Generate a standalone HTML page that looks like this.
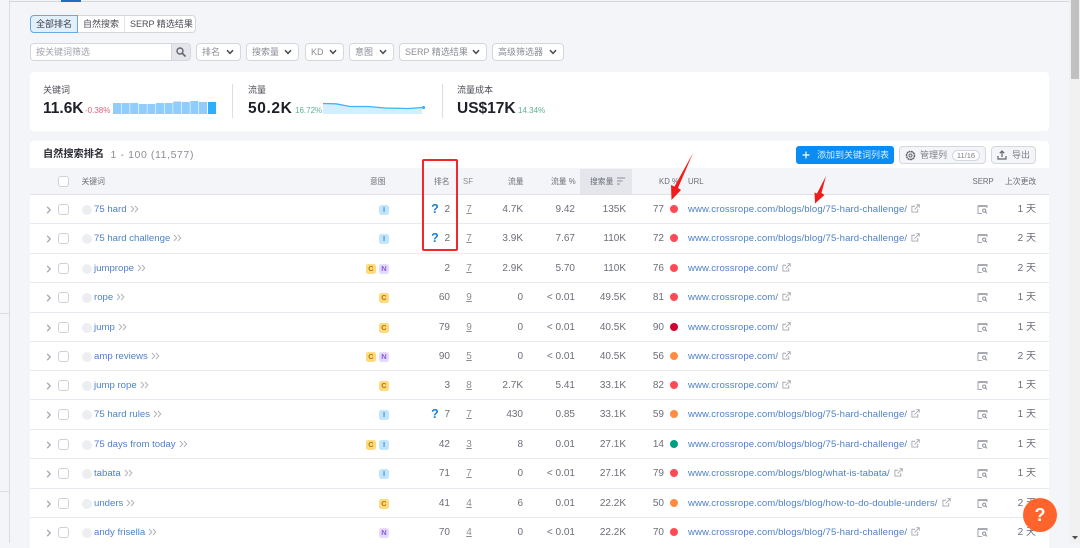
<!DOCTYPE html>
<html lang="zh"><head><meta charset="utf-8"><title>自然搜索排名</title>
<style>
*{box-sizing:border-box}
html,body{margin:0;padding:0}
body{width:1080px;height:543px;overflow:hidden;position:relative;background:#f4f5f9;font:10px/1 "Liberation Sans","Noto Sans CJK SC",sans-serif;color:#6c6e79}
.a{position:absolute}
.btn{position:absolute;top:43px;height:18px;background:#fff;border:1px solid #d5d7df;border-radius:4px;font-size:9px;line-height:16px;color:#8b8d97;padding-left:5px}
.btn svg{position:absolute;right:6px;top:5px}
.h{position:absolute;top:168px;height:27px;line-height:27px;font-size:7.8px;color:#6c6e79;white-space:nowrap}
.r{position:absolute;left:30px;width:1019px;height:30px;background:#fff;line-height:29px;font-size:10px;color:#6c6e79}
.r+.r::before{content:"";position:absolute;left:0;right:0;top:-1px;height:1px;background:#e9eaf0}
.r>*{position:absolute}
.ch{left:16px;top:10px}
.cb{left:28px;top:9px;width:10.5px;height:11px;border:1px solid #cfd1d8;border-radius:3px;background:#fff}
.ci{left:51.500px;top:9.500px;width:10px;height:10px;border-radius:50%;background:#eceef2}
.k{left:64px;color:#4f81c9;white-space:nowrap;font-size:9.6px}
.k svg{margin-left:3px;vertical-align:-1px}
.b{top:9.500px;width:10px;height:10px;border-radius:2.500px;font-size:7.500px;font-weight:bold;line-height:10px;text-align:center}
.bc{background:#ffd97a;color:#a8791a}.bn{background:#e6d9ff;color:#8a5bdc}.bi{background:#c2e5fd;color:#3d8fd0}
.p1{left:349px}.p2{left:336px}
.q{left:401px;width:8px;text-align:center;color:#1f7fd4;font-weight:bold;font-size:12.500px}
.t1{right:599px;width:34px;text-align:right}
.t2{left:434px;width:10px;text-align:center;text-decoration:underline;color:#8b8d97}
.t3{right:526px;width:50px;text-align:right}
.t4{right:474px;width:50px;text-align:right}
.t5{right:423px;width:50px;text-align:right}
.t6{right:385px;width:30px;text-align:right}
.d{left:640px;top:10px;width:8px;height:8px;border-radius:50%}
.dr{background:#ff4953}.dd{background:#d1002f}.do{background:#ff8c43}.dg{background:#009f81}
.u{left:658px;color:#4f81c9;white-space:nowrap;font-size:9.6px;letter-spacing:.09px}
.u svg{margin-left:4px;vertical-align:-1px}
.s{left:947px;top:9px}
.l{right:13px;width:40px;text-align:right;font-size:10px}
</style></head>
<body>
<svg width="0" height="0" style="position:absolute"><defs>
<symbol id="dn" viewBox="0 0 8 6"><path d="M1 1.200 4 4.400 7 1.200" fill="none" stroke="#4b4d57" stroke-width="1.500"/></symbol>
<symbol id="ar" viewBox="0 0 6 10"><path d="M1.200 1.800 4.200 5 1.200 8.200" fill="none" stroke="#a4a6af" stroke-width="1.300"/></symbol>
<symbol id="dbl" viewBox="0 0 9 8"><path d="M1 1 3.800 4 1 7M5 1 7.800 4 5 7" fill="none" stroke="#b2b4bc" stroke-width="1"/></symbol>
<symbol id="ex" viewBox="0 0 10 10"><path d="M7.500 5.500V9H1V2.500H4.500M4 6 9 1M6 .8H9.200V4" fill="none" stroke="#a4a6af" stroke-width="1"/></symbol>
<symbol id="se" viewBox="0 0 11 11"><path d="M1 1.500H10V4M1 1.500V9.500H5" fill="none" stroke="#a8aab3" stroke-width="1.100"/><path d="M1 1.500H10V3H1Z" fill="#a8aab3"/><circle cx="7.200" cy="6.600" r="1.600" fill="none" stroke="#8b8d97" stroke-width="1"/><path d="M8.400 7.800 10 9.400" stroke="#8b8d97" stroke-width="1"/></symbol>
</defs></svg>

<!-- left rail -->
<div class="a" style="left:9px;top:0;width:1px;height:543px;background:#d9dbe3"></div>
<div class="a" style="left:0;top:313px;width:9px;height:1px;background:#dcdee5"></div>
<div class="a" style="left:0;top:491px;width:9px;height:1px;background:#dcdee5"></div>
<!-- top line -->
<div class="a" style="left:9px;top:1px;width:1060px;height:1px;background:#d5d7df"></div>
<div class="a" style="left:61px;top:0;width:20px;height:2px;background:#1b6fc9"></div>

<!-- tabs -->
<div class="a" style="left:30px;top:15px;width:166px;height:18px;background:#fff;border:1px solid #d5d7df;border-radius:4px"></div>
<div class="a" style="left:30px;top:15px;width:48px;height:18px;background:#e2f0fc;border:1px solid #6aa9e0;border-radius:4px 0 0 4px;font-size:9px;line-height:16px;text-align:center;color:#3c3e48">全部排名</div>
<div class="a" style="left:83px;top:15px;height:18px;font-size:9px;line-height:18px;color:#4b4d57">自然搜索</div>
<div class="a" style="left:124px;top:16px;width:1px;height:16px;background:#e4e5ea"></div>
<div class="a" style="left:130px;top:15px;height:18px;font-size:9px;line-height:18px;color:#4b4d57;white-space:nowrap">SERP 精选结果</div>

<!-- filters -->
<div class="a" style="left:30px;top:43px;width:142px;height:18px;background:#fff;border:1px solid #d5d7df;border-radius:4px 0 0 4px;font-size:9px;line-height:16px;color:#a0a2ac;padding-left:5px">按关键词筛选</div>
<div class="a" style="left:171px;top:43px;width:20px;height:18px;background:#e4e6ec;border:1px solid #d5d7df;border-radius:0 4px 4px 0"><svg width="12" height="12" viewBox="0 0 12 12" style="position:absolute;left:3px;top:2px"><circle cx="5" cy="5" r="3" fill="none" stroke="#63656f" stroke-width="1.400"/><path d="M7.200 7.200 10.500 10.500" stroke="#63656f" stroke-width="1.600"/></svg></div>
<div class="btn" style="left:196px;width:45px">排名<svg width="8" height="6"><use href="#dn"/></svg></div>
<div class="btn" style="left:246px;width:53px">搜索量<svg width="8" height="6"><use href="#dn"/></svg></div>
<div class="btn" style="left:305px;width:39px">KD<svg width="8" height="6"><use href="#dn"/></svg></div>
<div class="btn" style="left:349px;width:45px">意图<svg width="8" height="6"><use href="#dn"/></svg></div>
<div class="btn" style="left:399px;width:88px;white-space:nowrap">SERP 精选结果<svg width="8" height="6"><use href="#dn"/></svg></div>
<div class="btn" style="left:492px;width:72px">高级筛选器<svg width="8" height="6"><use href="#dn"/></svg></div>

<!-- stats card -->
<div class="a" style="left:30px;top:72px;width:1019px;height:59px;background:#fff;border-radius:4px"></div>
<div class="a" style="left:43px;top:86px;font-size:9px;color:#4b4d57">关键词</div>
<div class="a" style="left:43px;top:101px;font-size:15.500px;font-weight:bold;color:#1e2029">11.6K</div>
<div class="a" style="left:85px;top:107px;font-size:8px;color:#d9647a">-0.38%</div>
<svg class="a" style="left:113px;top:100px" width="104" height="15">
<g fill="#8fcdfd"><rect x="0" y="3" width="8" height="11"/><rect x="8.600" y="3" width="8" height="11"/><rect x="17.200" y="3" width="8" height="11"/><rect x="25.800" y="4" width="8" height="10"/><rect x="34.400" y="4" width="8" height="10"/><rect x="43" y="3" width="8" height="11"/><rect x="51.600" y="3" width="8" height="11"/><rect x="60.200" y="1.500" width="8" height="12.500"/><rect x="68.800" y="2" width="8" height="12"/><rect x="77.400" y="1" width="8" height="13"/><rect x="86" y="2" width="8" height="12"/></g><rect x="95" y="2" width="8" height="12" fill="#2db0fb"/></svg>
<div class="a" style="left:232px;top:84px;width:1px;height:34px;background:#dcdee5"></div>
<div class="a" style="left:248px;top:86px;font-size:9px;color:#4b4d57">流量</div>
<div class="a" style="left:248px;top:101px;font-size:15.500px;font-weight:bold;color:#1e2029;letter-spacing:.6px">50.2K</div>
<div class="a" style="left:295px;top:107px;font-size:8px;color:#5fae96">16.72%</div>
<svg class="a" style="left:323px;top:101px" width="104" height="16"><path d="M0 2.500 13 2.800 27 5.500 45 5.500 62 7 85 7.500 99 6.500V13H0Z" fill="#d3eefe"/><path d="M0 2.500 13 2.800 27 5.500 45 5.500 62 7 85 7.500 100 6.500" fill="none" stroke="#3cb4fa" stroke-width="1.300"/><circle cx="100.500" cy="6.500" r="1.600" fill="#3cb4fa"/></svg>
<div class="a" style="left:442px;top:84px;width:1px;height:34px;background:#dcdee5"></div>
<div class="a" style="left:457px;top:86px;font-size:9px;color:#4b4d57">流量成本</div>
<div class="a" style="left:457px;top:101px;font-size:15.500px;font-weight:bold;color:#1e2029;white-space:nowrap">US$17K</div>
<div class="a" style="left:518px;top:107px;font-size:8px;color:#5fae96">14.34%</div>

<!-- table card -->
<div class="a" style="left:30px;top:141px;width:1019px;height:402px;background:#fff;border-radius:4px 4px 0 0"></div>
<div class="a" style="left:43px;top:150px;font-size:10.200px;font-weight:bold;color:#2b2d37;white-space:nowrap">自然搜索排名</div>
<div class="a" style="left:110.500px;top:150px;font-size:10.500px;color:#8b8d97;white-space:nowrap;letter-spacing:.6px">1 - 100 (11,577)</div>
<div class="a" style="left:796px;top:146px;width:98px;height:18px;background:#0a8cf5;border-radius:3px;color:#d8eefe;font-size:9px;line-height:18px;padding-left:21px;white-space:nowrap">添加到关键词列表<svg width="8" height="8" viewBox="0 0 8 8" style="position:absolute;left:6px;top:5px"><path d="M4 .5V7.500M.5 4H7.500" stroke="#fff" stroke-width="1.200"/></svg></div>
<div class="a" style="left:899px;top:146px;width:87px;height:18px;background:#f4f5f9;border:1px solid #d5d7df;border-radius:4px;font-size:9px;line-height:16px;color:#7c7e88;padding-left:20px">管理列<svg width="11" height="11" viewBox="0 0 11 11" style="position:absolute;left:5px;top:2.500px"><circle cx="5.500" cy="5.500" r="4" fill="none" stroke="#63656f" stroke-width="1.500" stroke-dasharray="2 .4"/><circle cx="5.500" cy="5.500" r="1.500" fill="none" stroke="#63656f"/></svg><span class="a" style="left:52px;top:2.500px;width:28px;height:11px;border:1px solid #d5d7df;border-radius:6px;background:#fff;font-size:7.500px;line-height:9px;text-align:center;padding:0">11/16</span></div>
<div class="a" style="left:991px;top:146px;width:45px;height:18px;background:#f4f5f9;border:1px solid #d5d7df;border-radius:4px;font-size:9px;line-height:16px;color:#7c7e88;padding-left:20px">导出<svg width="10" height="10" viewBox="0 0 10 10" style="position:absolute;left:5px;top:3px"><path d="M5 7V1M2.800 3.200 5 1 7.200 3.200M1 6V9H9V6" fill="none" stroke="#63656f" stroke-width="1.200"/></svg></div>

<!-- header -->
<div class="a" style="left:30px;top:168px;width:1019px;height:27px;background:#f4f5f9;border-bottom:1px solid #e0e2e8"></div>
<div class="a" style="left:580px;top:169px;width:52px;height:25px;background:#e4e6ec"></div>
<div class="a" style="left:58px;top:176px;width:10.500px;height:11px;border:1px solid #cfd1d8;border-radius:3px;background:#fff"></div>
<div class="h" style="left:81.500px">关键词</div>
<div class="h" style="left:370px">意图</div>
<div class="h" style="left:434px">排名</div>
<div class="h" style="left:463px;color:#8b8d97">SF</div>
<div class="h" style="left:508px">流量</div>
<div class="h" style="left:551px">流量 %</div>
<div class="h" style="left:590px">搜索量</div>
<svg class="a" style="left:617px;top:177px" width="8" height="8"><path d="M0 1H8M0 4H5.500M0 7H3" stroke="#8b8d97"/></svg>
<div class="h" style="left:659px">KD %</div>
<div class="h" style="left:688px">URL</div>
<div class="h" style="left:972.500px">SERP</div>
<div class="h" style="left:1005px">上次更改</div>

<!-- rows -->
<div class="r" style="top:195px"><svg class="ch" width="6" height="10"><use href="#ar"/></svg><i class="cb"></i><i class="ci"></i><span class="k">75 hard<svg width="9" height="8"><use href="#dbl"/></svg></span><b class="b bi p1">I</b><span class="q">?</span><span class="t1">2</span><span class="t2">7</span><span class="t3">4.7K</span><span class="t4">9.42</span><span class="t5">135K</span><span class="t6">77</span><i class="d dr"></i><span class="u">www.crossrope.com/blogs/blog/75-hard-challenge/<svg width="9" height="9"><use href="#ex"/></svg></span><svg class="s" width="11" height="11"><use href="#se"/></svg><span class="l">1 天</span></div>
<div class="r" style="top:224px"><svg class="ch" width="6" height="10"><use href="#ar"/></svg><i class="cb"></i><i class="ci"></i><span class="k">75 hard challenge<svg width="9" height="8"><use href="#dbl"/></svg></span><b class="b bi p1">I</b><span class="q">?</span><span class="t1">2</span><span class="t2">7</span><span class="t3">3.9K</span><span class="t4">7.67</span><span class="t5">110K</span><span class="t6">72</span><i class="d dr"></i><span class="u">www.crossrope.com/blogs/blog/75-hard-challenge/<svg width="9" height="9"><use href="#ex"/></svg></span><svg class="s" width="11" height="11"><use href="#se"/></svg><span class="l">2 天</span></div>
<div class="r" style="top:254px"><svg class="ch" width="6" height="10"><use href="#ar"/></svg><i class="cb"></i><i class="ci"></i><span class="k">jumprope<svg width="9" height="8"><use href="#dbl"/></svg></span><b class="b bc p2">C</b><b class="b bn p1">N</b><span class="t1">2</span><span class="t2">7</span><span class="t3">2.9K</span><span class="t4">5.70</span><span class="t5">110K</span><span class="t6">76</span><i class="d dr"></i><span class="u">www.crossrope.com/<svg width="9" height="9"><use href="#ex"/></svg></span><svg class="s" width="11" height="11"><use href="#se"/></svg><span class="l">2 天</span></div>
<div class="r" style="top:283px"><svg class="ch" width="6" height="10"><use href="#ar"/></svg><i class="cb"></i><i class="ci"></i><span class="k">rope<svg width="9" height="8"><use href="#dbl"/></svg></span><b class="b bc p1">C</b><span class="t1">60</span><span class="t2">9</span><span class="t3">0</span><span class="t4">&lt; 0.01</span><span class="t5">49.5K</span><span class="t6">81</span><i class="d dr"></i><span class="u">www.crossrope.com/<svg width="9" height="9"><use href="#ex"/></svg></span><svg class="s" width="11" height="11"><use href="#se"/></svg><span class="l">1 天</span></div>
<div class="r" style="top:313px"><svg class="ch" width="6" height="10"><use href="#ar"/></svg><i class="cb"></i><i class="ci"></i><span class="k">jump<svg width="9" height="8"><use href="#dbl"/></svg></span><b class="b bc p1">C</b><span class="t1">79</span><span class="t2">9</span><span class="t3">0</span><span class="t4">&lt; 0.01</span><span class="t5">40.5K</span><span class="t6">90</span><i class="d dd"></i><span class="u">www.crossrope.com/<svg width="9" height="9"><use href="#ex"/></svg></span><svg class="s" width="11" height="11"><use href="#se"/></svg><span class="l">1 天</span></div>
<div class="r" style="top:342px"><svg class="ch" width="6" height="10"><use href="#ar"/></svg><i class="cb"></i><i class="ci"></i><span class="k">amp reviews<svg width="9" height="8"><use href="#dbl"/></svg></span><b class="b bc p2">C</b><b class="b bn p1">N</b><span class="t1">90</span><span class="t2">5</span><span class="t3">0</span><span class="t4">&lt; 0.01</span><span class="t5">40.5K</span><span class="t6">56</span><i class="d do"></i><span class="u">www.crossrope.com/<svg width="9" height="9"><use href="#ex"/></svg></span><svg class="s" width="11" height="11"><use href="#se"/></svg><span class="l">2 天</span></div>
<div class="r" style="top:371px"><svg class="ch" width="6" height="10"><use href="#ar"/></svg><i class="cb"></i><i class="ci"></i><span class="k">jump rope<svg width="9" height="8"><use href="#dbl"/></svg></span><b class="b bc p1">C</b><span class="t1">3</span><span class="t2">8</span><span class="t3">2.7K</span><span class="t4">5.41</span><span class="t5">33.1K</span><span class="t6">82</span><i class="d dr"></i><span class="u">www.crossrope.com/<svg width="9" height="9"><use href="#ex"/></svg></span><svg class="s" width="11" height="11"><use href="#se"/></svg><span class="l">1 天</span></div>
<div class="r" style="top:400px"><svg class="ch" width="6" height="10"><use href="#ar"/></svg><i class="cb"></i><i class="ci"></i><span class="k">75 hard rules<svg width="9" height="8"><use href="#dbl"/></svg></span><b class="b bi p1">I</b><span class="q">?</span><span class="t1">7</span><span class="t2">7</span><span class="t3">430</span><span class="t4">0.85</span><span class="t5">33.1K</span><span class="t6">59</span><i class="d do"></i><span class="u">www.crossrope.com/blogs/blog/75-hard-challenge/<svg width="9" height="9"><use href="#ex"/></svg></span><svg class="s" width="11" height="11"><use href="#se"/></svg><span class="l">1 天</span></div>
<div class="r" style="top:430px"><svg class="ch" width="6" height="10"><use href="#ar"/></svg><i class="cb"></i><i class="ci"></i><span class="k">75 days from today<svg width="9" height="8"><use href="#dbl"/></svg></span><b class="b bc p2">C</b><b class="b bi p1">I</b><span class="t1">42</span><span class="t2">3</span><span class="t3">8</span><span class="t4">0.01</span><span class="t5">27.1K</span><span class="t6">14</span><i class="d dg"></i><span class="u">www.crossrope.com/blogs/blog/75-hard-challenge/<svg width="9" height="9"><use href="#ex"/></svg></span><svg class="s" width="11" height="11"><use href="#se"/></svg><span class="l">1 天</span></div>
<div class="r" style="top:459px"><svg class="ch" width="6" height="10"><use href="#ar"/></svg><i class="cb"></i><i class="ci"></i><span class="k">tabata<svg width="9" height="8"><use href="#dbl"/></svg></span><b class="b bi p1">I</b><span class="t1">71</span><span class="t2">7</span><span class="t3">0</span><span class="t4">&lt; 0.01</span><span class="t5">27.1K</span><span class="t6">79</span><i class="d dr"></i><span class="u">www.crossrope.com/blogs/blog/what-is-tabata/<svg width="9" height="9"><use href="#ex"/></svg></span><svg class="s" width="11" height="11"><use href="#se"/></svg><span class="l">1 天</span></div>
<div class="r" style="top:489px"><svg class="ch" width="6" height="10"><use href="#ar"/></svg><i class="cb"></i><i class="ci"></i><span class="k">unders<svg width="9" height="8"><use href="#dbl"/></svg></span><b class="b bc p1">C</b><span class="t1">41</span><span class="t2">4</span><span class="t3">6</span><span class="t4">0.01</span><span class="t5">22.2K</span><span class="t6">50</span><i class="d do"></i><span class="u">www.crossrope.com/blogs/blog/how-to-do-double-unders/<svg width="9" height="9"><use href="#ex"/></svg></span><svg class="s" width="11" height="11"><use href="#se"/></svg><span class="l">2 天</span></div>
<div class="r" style="top:518px"><svg class="ch" width="6" height="10"><use href="#ar"/></svg><i class="cb"></i><i class="ci"></i><span class="k">andy frisella<svg width="9" height="8"><use href="#dbl"/></svg></span><b class="b bn p1">N</b><span class="t1">70</span><span class="t2">4</span><span class="t3">0</span><span class="t4">&lt; 0.01</span><span class="t5">22.2K</span><span class="t6">70</span><i class="d dr"></i><span class="u">www.crossrope.com/blogs/blog/75-hard-challenge/<svg width="9" height="9"><use href="#ex"/></svg></span><svg class="s" width="11" height="11"><use href="#se"/></svg><span class="l">2 天</span></div>

<!-- annotations -->
<div class="a" style="left:421.500px;top:159px;width:36px;height:92px;border:2px solid #f02a2a;border-radius:2px"></div>
<svg class="a" style="left:0;top:0" width="1080" height="543"><path d="M693 153 678 188 681 190 671.500 200 671 185 674.500 186.500Z" fill="#f01c1c"/><path d="M826 176 821.500 193 824.500 195 815 203.500 814.500 192.500 817 193.500Z" fill="#f01c1c"/></svg>

<!-- help -->
<div class="a" style="left:1023px;top:498px;width:34px;height:34px;border-radius:50%;background:#ff642d;color:#fff;font-size:18px;font-weight:bold;line-height:34px;text-align:center">?</div>

<!-- scrollbar -->
<div class="a" style="left:1069px;top:0;width:11px;height:543px;background:#f1f1f1"></div>
<div class="a" style="left:1071px;top:0;width:8px;height:79px;background:#c1c1c1"></div>
<svg class="a" style="left:1072px;top:536px" width="6" height="4"><path d="M0 0H6L3 3.500Z" fill="#505050"/></svg>
</body></html>
